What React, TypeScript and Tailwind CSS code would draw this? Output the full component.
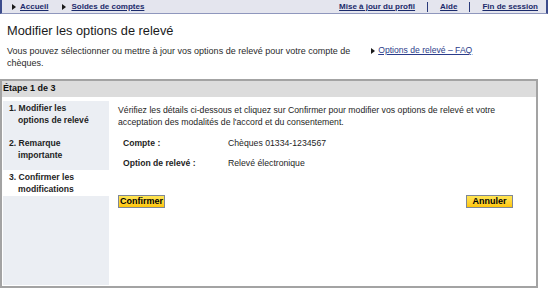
import React from "react";

function Tri({ color = "#1a1a1a" }: { color?: string }) {
  return (
    <svg width="4" height="6" viewBox="0 0 4 6" className="shrink-0">
      <path d="M0 0L4 3L0 6Z" fill={color} />
    </svg>
  );
}

export default function App() {
  return (
    <div className="w-[552px] h-[298px] bg-white overflow-hidden font-['Liberation_Sans',Arial,sans-serif] text-[#1e1e1e]">
      {/* top nav */}
      <div className="w-[548px] h-[14px] bg-[#e4e5ee] border-l-2 border-r-2 border-b border-l-[#3c4c8c] border-r-[#3c4c8c] border-b-[#8f97bd] flex items-center justify-between text-[8px] leading-[10px] font-bold text-[#1b2a6b]">
        <div className="flex items-center">
          <span className="ml-[10px] flex items-center gap-[4px]">
            <Tri />
            <a className="underline">Accueil</a>
          </span>
          <span className="ml-[14px] flex items-center gap-[5px]">
            <Tri />
            <a className="underline">Soldes de comptes</a>
          </span>
        </div>
        <div className="flex items-center mr-[8px]">
          <a className="underline">Mise à jour du profil</a>
          <span className="mx-[12px] w-px h-[10px] bg-[#2a3a7a]" />
          <a className="underline">Aide</a>
          <span className="mx-[12px] w-px h-[10px] bg-[#2a3a7a]" />
          <a className="underline">Fin de session</a>
        </div>
      </div>

      {/* title */}
      <h1 className="mt-[9px] ml-[7px] text-[12.8px] leading-[15px] text-[#1a1a1a]">
        Modifier les options de relevé
      </h1>

      {/* intro */}
      <div className="mt-[6px] flex items-start h-[35px]">
        <p className="ml-[7px] mt-[1px] text-[9px] leading-[12px] text-[#2a2a2a]">
          Vous pouvez sélectionner ou mettre à jour vos options de relevé pour votre compte de
          <br />
          chèques.
        </p>
        <div className="ml-[21px] mt-[1px] flex items-center gap-[3px] text-[8.6px] leading-[11px]">
          <Tri />
          <a className="underline text-[#2b3c8a]">Options de relevé – FAQ</a>
        </div>
      </div>

      {/* panel */}
      <div className="w-[538px] h-[209px] border-2 border-[#a3a3a3] flex flex-col">
        <div className="h-[16px] bg-[#dcdcdc] flex items-center pl-[1px] text-[9px] font-bold text-[#111]">
          Étape 1 de 3
        </div>
        <div className="flex-1 flex pt-[4px] pb-[1px]">
          {/* sidebar */}
          <div className="ml-[1px] w-[106px] flex flex-col text-[8.6px] leading-[12px] font-bold text-[#1e1e1e]">
            <div className="h-[35px] pt-[1px] pl-[15px] -indent-[9px] bg-[#ebeef3]">
              1. Modifier les
              <br />
              options de relevé
            </div>
            <div className="h-[34px] pt-[1px] pl-[15px] -indent-[9px] bg-[#ebeef3]">
              2. Remarque
              <br />
              importante
            </div>
            <div className="h-[26px] pt-[1px] pl-[15px] -indent-[9px] bg-white">
              3. Confirmer les
              <br />
              modifications
            </div>
            <div className="flex-1 bg-[#ebeef3]" />
          </div>

          {/* content */}
          <div className="flex-1 pl-[9px] pr-[23px] pt-[3px] text-[8.7px] leading-[12px] text-[#1e1e1e]">
            <p>
              Vérifiez les détails ci-dessous et cliquez sur Confirmer pour modifier vos options de relevé et votre
              <br />
              acceptation des modalités de l'accord et du consentement.
            </p>
            <div className="mt-[5px] ml-[5px] flex h-[20px] items-center">
              <span className="w-[105px] font-bold text-[8.6px]">Compte :</span>
              <span>Chèques 01334-1234567</span>
            </div>
            <div className="ml-[5px] flex h-[20px] items-center">
              <span className="w-[105px] font-bold text-[8.6px]">Option de relevé :</span>
              <span>Relevé électronique</span>
            </div>
            <div className="mt-[22px] flex justify-between">
              <button className="w-[47px] h-[13px] border border-[#7f8796] bg-gradient-to-b from-[#ffe552] to-[#ffc600] text-[9px] leading-[11px] font-bold text-black flex items-center justify-center">
                Confirmer
              </button>
              <button className="w-[47px] h-[13px] border border-[#7f8796] bg-gradient-to-b from-[#ffe552] to-[#ffc600] text-[9px] leading-[11px] font-bold text-black flex items-center justify-center">
                Annuler
              </button>
            </div>
          </div>
        </div>
      </div>
    </div>
  );
}
